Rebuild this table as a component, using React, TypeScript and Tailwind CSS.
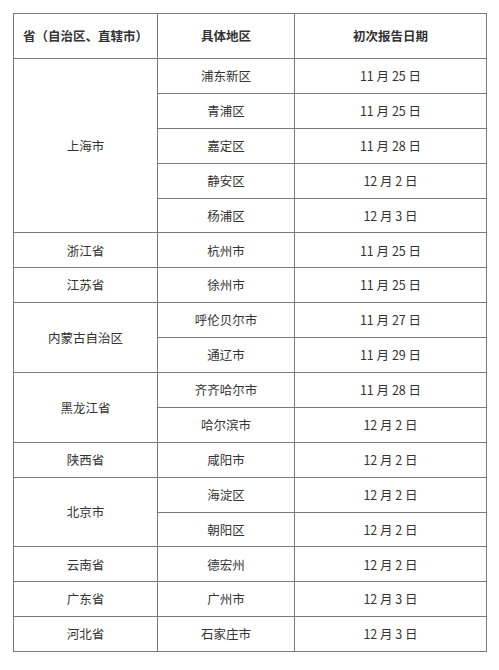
import React from "react";

type Row = { p?: string; span?: number; c: string; d: string };

const rows: Row[] = [
  { p: "上海市", span: 5, c: "浦东新区", d: "11 月 25 日" },
  { c: "青浦区", d: "11 月 25 日" },
  { c: "嘉定区", d: "11 月 28 日" },
  { c: "静安区", d: "12 月 2 日" },
  { c: "杨浦区", d: "12 月 3 日" },
  { p: "浙江省", span: 1, c: "杭州市", d: "11 月 25 日" },
  { p: "江苏省", span: 1, c: "徐州市", d: "11 月 25 日" },
  { p: "内蒙古自治区", span: 2, c: "呼伦贝尔市", d: "11 月 27 日" },
  { c: "通辽市", d: "11 月 29 日" },
  { p: "黑龙江省", span: 2, c: "齐齐哈尔市", d: "11 月 28 日" },
  { c: "哈尔滨市", d: "12 月 2 日" },
  { p: "陕西省", span: 1, c: "咸阳市", d: "12 月 2 日" },
  { p: "北京市", span: 2, c: "海淀区", d: "12 月 2 日" },
  { c: "朝阳区", d: "12 月 2 日" },
  { p: "云南省", span: 1, c: "德宏州", d: "12 月 2 日" },
  { p: "广东省", span: 1, c: "广州市", d: "12 月 3 日" },
  { p: "河北省", span: 1, c: "石家庄市", d: "12 月 3 日" },
];

export default function App() {
  return (
    <div
      className="w-[499px] h-[670px] bg-white pt-[13px] pl-[13px]"
      style={{ fontFamily: '"Noto Sans CJK SC", "Noto Sans", sans-serif' }}
    >
      <table className="table-fixed border-collapse w-[473px] text-[12.5px] text-[#333]">
        <colgroup>
          <col className="w-[144px]" />
          <col className="w-[137px]" />
          <col className="w-[192px]" />
        </colgroup>
        <thead>
          <tr className="h-[45px]">
            <th className="border border-[#7a7a7a] font-bold text-center align-middle p-0">省（自治区、直辖市）</th>
            <th className="border border-[#7a7a7a] font-bold text-center align-middle p-0">具体地区</th>
            <th className="border border-[#7a7a7a] font-bold text-center align-middle p-0">初次报告日期</th>
          </tr>
        </thead>
        <tbody>
          {rows.map((r, i) => (
            <tr key={i} className="h-[34.9px]">
              {r.p && (
                <td
                  rowSpan={r.span}
                  className="border border-[#7a7a7a] text-center align-middle p-0 pt-[1px]"
                >
                  {r.p}
                </td>
              )}
              <td className="border border-[#7a7a7a] text-center align-middle p-0 pt-[1px]">{r.c}</td>
              <td className="border border-[#7a7a7a] text-center align-middle p-0 pt-[1px] whitespace-pre">{r.d}</td>
            </tr>
          ))}
        </tbody>
      </table>
    </div>
  );
}
